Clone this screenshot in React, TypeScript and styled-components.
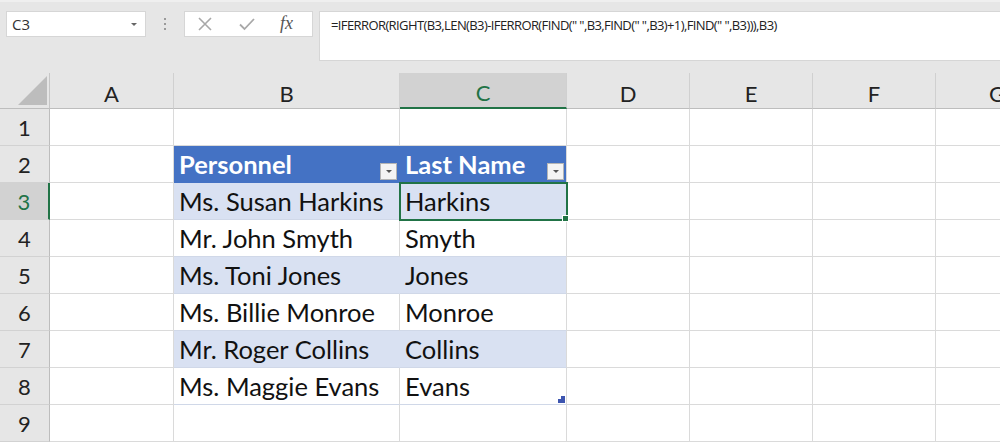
import React from "react";
import styled, { createGlobalStyle, css } from "styled-components";

const GlobalStyle = createGlobalStyle`
  html, body { margin: 0; padding: 0; background: #ffffff; overflow: hidden; }
  * { box-sizing: border-box; }
`;

const Page = styled.div`
  width: 1000px;
  height: 443px;
  overflow: hidden;
  font-family: Lato, "Noto Sans", sans-serif;
  background: #ffffff;
`;

const FormulaBar = styled.div`
  height: 73px;
  background: #e6e6e6;
  border-top: 2px solid #efefef;
  display: flex;
  align-items: flex-start;
  padding: 9px 0 0 6px;
`;

const NameBox = styled.div`
  width: 140px;
  height: 26px;
  background: #ffffff;
  border: 1px solid #d6d6d6;
  display: flex;
  align-items: center;
  justify-content: space-between;
  padding: 0 8px 0 5px;
  font-family: "Open Sans", "Noto Sans", sans-serif;
  font-size: 15px;
  color: #333333;
`;

const Caret = styled.span`
  width: 0;
  height: 0;
  border-left: 3px solid transparent;
  border-right: 3px solid transparent;
  border-top: 3px solid #666666;
`;

const Grip = styled.div`
  width: 38px;
  height: 26px;
  display: flex;
  flex-direction: column;
  align-items: center;
  justify-content: center;
  gap: 3px;
`;

const GripDot = styled.span`
  width: 2px;
  height: 2px;
  background: #9a9a9a;
`;

const ButtonsBox = styled.div`
  width: 129px;
  height: 26px;
  margin-right: 6px;
  background: #ffffff;
  border: 1px solid #d6d6d6;
  display: flex;
  align-items: center;
  padding: 0 0 0 13px;
  gap: 27px;
`;

const Fx = styled.span`
  font-family: "Liberation Serif", "DejaVu Serif", serif;
  font-style: italic;
  font-size: 18px;
  color: #555555;
  margin-left: -2px;
  margin-top: -2px;
`;

const FormulaInput = styled.div`
  flex: 1;
  height: 50px;
  background: #ffffff;
  border: 1px solid #d6d6d6;
  border-right: none;
  padding: 4px 0 0 11px;
  font-family: "Open Sans", "Noto Sans", sans-serif;
  font-size: 13px;
  letter-spacing: -0.6px;
  color: #222222;
  white-space: nowrap;
`;

const Sheet = styled.div`
  display: grid;
  grid-template-columns: 50px 124px 226px 167px 123px 123px 123px 123px;
  grid-template-rows: 36px repeat(9, 37px);
`;

const Corner = styled.div`
  background: #e6e6e6;
  border-right: 1px solid #c6c6c6;
  border-bottom: 1px solid #bdbdbd;
  display: flex;
  align-items: flex-end;
  justify-content: flex-end;
  padding: 0 2px 3px 0;
`;

const ColHeader = styled.div<{ $selected?: boolean }>`
  background: #e6e6e6;
  border-right: 1px solid #d0d0d0;
  border-bottom: 1px solid #bdbdbd;
  display: flex;
  align-items: center;
  justify-content: center;
  padding-top: 5px;
  font-size: 22px;
  color: #222222;
  ${(p) =>
    p.$selected &&
    css`
      background: #d2d2d2;
      color: #217346;
      border-bottom: 2px solid #217346;
    `}
`;

const RowHeader = styled.div<{ $selected?: boolean }>`
  background: #e6e6e6;
  border-right: 1px solid #bdbdbd;
  border-bottom: 1px solid #d2d2d2;
  display: flex;
  align-items: center;
  justify-content: center;
  font-size: 22px;
  color: #222222;
  ${(p) =>
    p.$selected &&
    css`
      background: #d2d2d2;
      color: #217346;
      border-right: 2px solid #217346;
    `}
`;

type Band = "none" | "head" | "odd" | "even";

const Cell = styled.div<{ $band: Band; $selected?: boolean; $edge?: boolean }>`
  position: relative;
  background: #ffffff;
  border-right: 1px solid #dadada;
  border-bottom: 1px solid #dadada;
  display: flex;
  align-items: center;
  padding-left: 5px;
  font-size: 25.5px;
  color: #111111;
  white-space: nowrap;
  ${(p) =>
    p.$band === "head" &&
    css`
      background: #4472c4;
      color: #ffffff;
      font-weight: 700;
      border-right-color: ${p.$edge ? "#dadada" : "#4472c4"};
      border-bottom-color: #4472c4;
      justify-content: space-between;
    `}
  ${(p) =>
    p.$band === "odd" &&
    css`
      background: #d9e1f2;
      border-right-color: ${p.$edge ? "#dadada" : "#d9e1f2"};
      border-bottom-color: #d0d8e8;
    `}
  ${(p) =>
    p.$band === "even" &&
    css`
      border-bottom-color: #d0d8e8;
    `}
  ${(p) =>
    p.$selected &&
    css`
      z-index: 2;
      outline: 2px solid #217346;
      outline-offset: -1px;
      &::after {
        content: "";
        position: absolute;
        right: -3px;
        bottom: -3px;
        width: 5px;
        height: 5px;
        background: #217346;
        border: 1px solid #ffffff;
      }
    `}
`;

const FilterButton = styled.span`
  align-self: flex-end;
  margin: 0 2px 2px 0;
  width: 17px;
  height: 17px;
  background: #f4f4f4;
  border: 1px solid #b5b5b5;
  display: flex;
  align-items: center;
  justify-content: center;
  &::before {
    content: "";
    width: 0;
    height: 0;
    border-left: 3px solid transparent;
    border-right: 3px solid transparent;
    border-top: 3px solid #555555;
  }
`;

const HeadText = styled.span`
  padding-bottom: 1px;
`;

const ResizeHandle = styled.svg`
  position: absolute;
  right: 1px;
  bottom: 1px;
`;

const columns = ["A", "B", "C", "D", "E", "F", "G"];

const people: [string, string][] = [
  ["Ms. Susan Harkins", "Harkins"],
  ["Mr. John Smyth", "Smyth"],
  ["Ms. Toni Jones", "Jones"],
  ["Ms. Billie Monroe", "Monroe"],
  ["Mr. Roger Collins", "Collins"],
  ["Ms. Maggie Evans", "Evans"],
];

function renderRow(row: number) {
  const cells: React.ReactNode[] = [];
  cells.push(
    <RowHeader key="h" $selected={row === 3}>
      {row}
    </RowHeader>
  );
  for (let c = 0; c < columns.length; c++) {
    const key = `${row}-${c}`;
    let band: Band = "none";
    let content: React.ReactNode = null;
    const inTable = (c === 1 || c === 2) && row >= 2 && row <= 8;
    if (inTable) {
      if (row === 2) {
        band = "head";
        content = (
          <>
            <HeadText>{c === 1 ? "Personnel" : "Last Name"}</HeadText>
            <FilterButton />
          </>
        );
      } else {
        band = row % 2 === 1 ? "odd" : "even";
        const p = people[row - 3];
        content = (
          <>
            {c === 1 ? p[0] : p[1]}
            {row === 8 && c === 2 && (
              <ResizeHandle width="7" height="7" viewBox="0 0 7 7">
                <polygon points="7,0 7,7 0,7 0,3 3,3 3,0" fill="#3d55b0" />
              </ResizeHandle>
            )}
          </>
        );
      }
    }
    cells.push(
      <Cell key={key} $band={band} $edge={c === 2} $selected={row === 3 && c === 2}>
        {content}
      </Cell>
    );
  }
  return cells;
}

export default function App() {
  return (
    <Page>
      <GlobalStyle />
      <FormulaBar>
        <NameBox>
          <span>C3</span>
          <Caret />
        </NameBox>
        <Grip>
          <GripDot />
          <GripDot />
          <GripDot />
        </Grip>
        <ButtonsBox>
          <svg width="14" height="14" viewBox="0 0 14 14">
            <path d="M1 1 L13 13 M13 1 L1 13" stroke="#a8a8a8" strokeWidth="1.6" fill="none" />
          </svg>
          <svg width="16" height="14" viewBox="0 0 16 14">
            <path d="M1 7.5 L5.5 12 L15 2" stroke="#a8a8a8" strokeWidth="1.8" fill="none" />
          </svg>
          <Fx>fx</Fx>
        </ButtonsBox>
        <FormulaInput>
          =IFERROR(RIGHT(B3,LEN(B3)-IFERROR(FIND(" ",B3,FIND(" ",B3)+1),FIND(" ",B3))),B3)
        </FormulaInput>
      </FormulaBar>
      <Sheet>
        <Corner>
          <svg width="29" height="29" viewBox="0 0 29 29">
            <polygon points="29,0 29,29 0,29" fill="#bdbdbd" />
          </svg>
        </Corner>
        {columns.map((col) => (
          <ColHeader key={col} $selected={col === "C"}>
            {col}
          </ColHeader>
        ))}
        {Array.from({ length: 9 }, (_, i) => renderRow(i + 1))}
      </Sheet>
    </Page>
  );
}
